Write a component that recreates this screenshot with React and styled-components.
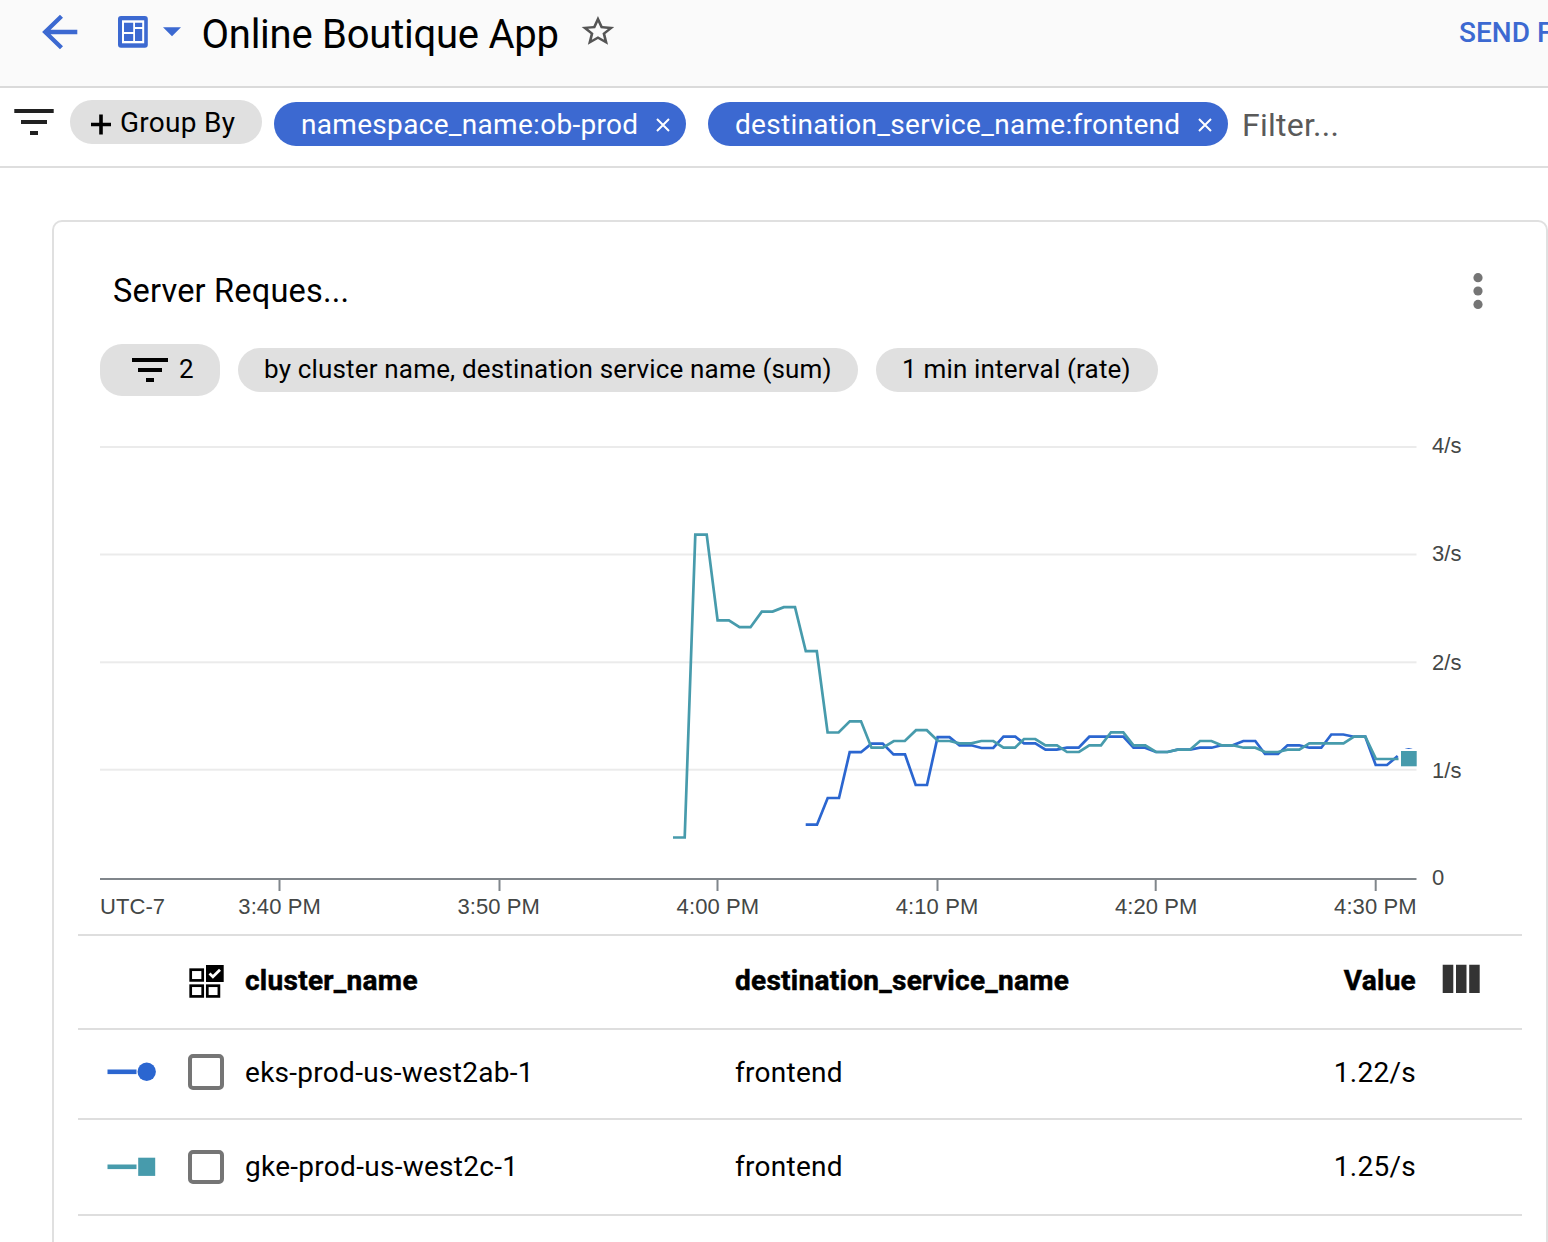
import React from "react";
import styled, { createGlobalStyle } from "styled-components";

const GlobalStyle = createGlobalStyle`
  *, *::before, *::after { box-sizing: border-box; }
  body { margin: 0; background: #fff; overflow: hidden; }
  svg { display: block; flex: none; }
`;

const Page = styled.div`
  display: flex;
  flex-direction: column;
  width: 1548px;
  height: 1242px;
  overflow: hidden;
  background: #fff;
  color: #000;
  font-family: Roboto, "Liberation Sans", sans-serif;
  font-size: 28px;
`;

const Header = styled.header`
  display: flex;
  flex: none;
  height: 88px;
  padding: 0 0 0 40px;
  background: #fafafa;
  border-bottom: 2px solid #dadada;
  white-space: nowrap;
`;

const HeaderIcon = styled.div`
  flex: none;
  width: ${(p) => p.$width}px;
`;

const PageTitle = styled.h1`
  flex: none;
  width: 376.5px;
  margin: 0;
  font-size: 40px;
  font-weight: 400;
  line-height: 70px;
  letter-spacing: -0.24px;
`;

const HeaderAction = styled.a`
  flex: none;
  margin-left: auto;
  width: 89px;
  overflow: hidden;
  color: #3c69d1;
  font-weight: 500;
  line-height: 65px;
`;

const FilterBar = styled.div`
  display: flex;
  flex: none;
  align-items: flex-start;
  height: 80px;
  border-bottom: 2px solid #dedede;
  padding: 12px 0 0 14px;
  white-space: nowrap;
`;

const Pill = styled.div`
  display: flex;
  flex: none;
  align-items: center;
  width: ${(p) => p.$width}px;
  height: ${(p) => p.$height || 44}px;
  margin: ${(p) => p.$margin || "0"};
  padding-left: ${(p) => p.$pad}px;
  border-radius: 22px;
  background: ${(p) => (p.$active ? "#3c69d1" : "#e0e0e0")};
  color: ${(p) => (p.$active ? "#fff" : "#000")};
  font-size: ${(p) => p.$size || 28}px;
  letter-spacing: ${(p) => p.$track || 0}px;
`;

const PillLabel = styled.span`
  line-height: 44px;
  margin-top: ${(p) => p.$drop || 0}px;
`;

const PillIcon = styled.span`
  margin: ${(p) => p.$margin};
`;

const FilterInput = styled.div`
  margin-left: 14px;
  color: #5a5a5a;
  font-size: 32px;
  line-height: 50px;
  letter-spacing: 0.25px;
`;

const Card = styled.section`
  display: flex;
  flex: none;
  flex-direction: column;
  width: 1496px;
  height: 1060px;
  margin: 52px 0 0 52px;
  border: 2px solid #e0e0e0;
  border-radius: 10px;
  padding: 0 24px;
`;

const CardHeader = styled.div`
  display: flex;
  justify-content: space-between;
  flex: none;
  height: 122px;
  padding: 44px 34px 0 35px;
`;

const CardTitle = styled.h2`
  margin: 0;
  font-size: 32.5px;
  font-weight: 400;
  line-height: 50px;
  letter-spacing: 0.2px;
`;

const PillRow = styled.div`
  display: flex;
  flex: none;
  align-items: center;
  gap: 18px;
  height: 52px;
  padding-left: 22px;
  white-space: nowrap;
`;

const ChartArea = styled.div`
  flex: none;
  height: 538px;
`;

const Table = styled.div`
  display: flex;
  flex: none;
  flex-direction: column;
  border-top: 2px solid #dedede;
`;

const TableRow = styled.div`
  display: grid;
  grid-template-columns: 110px 57px 490px 1fr 200px 106px;
  align-items: center;
  height: ${(p) => p.$height}px;
  padding-bottom: ${(p) => p.$lift}px;
  border-bottom: 2px solid #dedede;
  font-weight: ${(p) => (p.$head ? 700 : 400)};
  -webkit-text-stroke: ${(p) => (p.$head ? "0.5px #000" : "0")};
  letter-spacing: 0.28px;
  line-height: 40px;
`;

const Cell = styled.div`
  padding-top: ${(p) => p.$drop || 0}px;
  text-align: ${(p) => (p.$right ? "right" : "left")};
`;

const IconCell = styled.div`
  padding-left: ${(p) => p.$left || 0}px;
`;

const Checkbox = styled.span`
  display: block;
  width: 36px;
  height: ${(p) => p.$height}px;
  border: 4px solid #757575;
  border-radius: 5px;
`;

const AxisText = styled.text`
  font-family: "Liberation Sans", Arial, sans-serif;
  font-size: 22px;
  fill: #444746;
`;

const BLUE = "#2b66d0";
const TEAL = "#479bac";

const tealPoints =
  "673,837.5 684.7,837.5 695.3,534.7 706.7,534.7 717.6,620.3 728.9,620.3 739.5,627.2 750.5,627.2 761.8,611.6 772.6,611.6 783.8,607.2 795,607.2 805.8,651.2 816.8,651.2 827.6,732.5 838.6,732.5 849.8,721.3 861,721.3 871.5,747.7 883,747.7 893.8,741 904.8,741 916,730.2 926.8,730.2 938,741 949.5,741 959.5,743.3 971.3,743.3 981.3,741 993.3,741 1003.5,747.7 1015,747.7 1024,739 1035.3,739 1045.5,745.3 1057,745.3 1067,752 1079,752 1089.3,745.3 1101,745.3 1111,732.3 1123.3,732.3 1133.5,745.3 1145.3,745.3 1156,752 1167.5,752 1177.5,749.7 1190,749.7 1200,741 1211.5,741 1221.5,745.3 1232.7,745.3 1243.5,747.7 1255.3,747.7 1265,752 1278,752 1287.5,749.7 1299.3,749.7 1309.3,743.3 1343.5,743.3 1354,736.7 1365.3,736.7 1376,759 1398.5,759";
const bluePoints =
  "805.7,824.7 817,824.7 827.7,798 839,798 849.7,752.2 861,752.2 871.5,743.6 882.7,743.6 893.5,754.4 905,754.4 915.7,785 927,785 937.6,737.2 949.5,737.2 959.5,745.3 971.3,745.3 981.5,748 993.3,748 1003.5,736.7 1015.3,736.7 1024,743.3 1035.3,743.3 1045.5,749.7 1056.7,749.7 1067,747.7 1078.7,747.7 1089.3,736.7 1123.3,736.7 1133.5,747.7 1145,747.7 1156,752 1167.5,752 1177.5,749.7 1190,749.7 1200,747.7 1211.7,747.7 1221.5,745.3 1232.7,745.3 1243.3,741 1255.3,741 1265,754 1278,754 1287.5,745.3 1299.3,745.3 1309.3,747.7 1321.3,747.7 1331.3,734.5 1343.3,734.5 1354,736.7 1365.3,736.7 1375.7,765 1387,765 1397.7,756";

const yLabels = [
  ["4/s", 447, 453],
  ["3/s", 554.5, 561],
  ["2/s", 662.3, 669.5],
  ["1/s", 769.7, 777.7],
];
const xLabels = [
  ["3:40 PM", 279.5],
  ["3:50 PM", 499.5],
  ["4:00 PM", 717.5],
  ["4:10 PM", 937.5],
  ["4:20 PM", 1155.7],
  ["4:30 PM", 1375.7],
];

function Chart() {
  return (
    <svg width="1444" height="538" viewBox="78 396 1444 538">
      {yLabels.map(([label, y, baseline]) => (
        <g key={label}>
          <rect x="100" y={y - 1} width="1316.5" height="2" fill="#ebebeb" />
          <AxisText x="1432" y={baseline} textLength="29.5">{label}</AxisText>
        </g>
      ))}
      <rect x="100" y="878" width="1316.5" height="2" fill="#80868b" />
      <AxisText x="1432" y="885">0</AxisText>
      <AxisText x="100" y="914" textLength="65">UTC-7</AxisText>
      {xLabels.map(([label, x], i) => (
        <g key={label}>
          <rect x={x - 1} y="880" width="2" height="11" fill="#80868b" />
          <AxisText x={238.3 + i * 219.15} y="914" textLength="82.5">{label}</AxisText>
        </g>
      ))}
      <polyline points={bluePoints} fill="none" stroke={BLUE} strokeWidth="2.7" />
      <circle cx="1408.7" cy="757" r="9" fill={BLUE} />
      <polyline points={tealPoints} fill="none" stroke={TEAL} strokeWidth="2.7" />
      <rect x="1400" y="750" width="17.7" height="17.3" fill={TEAL} stroke="#fff" strokeWidth="2" />
    </svg>
  );
}

function CloseIcon() {
  return (
    <svg width="14" height="14" viewBox="0 0 14 14">
      <path d="M1 1 13 13M13 1 1 13" stroke="#fff" strokeWidth="2" />
    </svg>
  );
}

function SeriesMarker({ color, square }) {
  return (
    <svg width="50" height="20" viewBox="0 0 50 20">
      <rect x="0.5" y="7.5" width="29" height="4.6" fill={color} />
      {square ? (
        <rect x="31.2" y="0.7" width="17" height="18.2" fill={color} />
      ) : (
        <circle cx="39.7" cy="9.8" r="9.2" fill={color} />
      )}
    </svg>
  );
}

const rows = [
  { cluster: "eks-prod-us-west2ab-1", service: "frontend", value: "1.22/s", color: BLUE, height: 90, lift: 4, box: 36, drop: 1 },
  { cluster: "gke-prod-us-west2c-1", service: "frontend", value: "1.25/s", color: TEAL, square: true, height: 96, lift: 1, box: 34, drop: 0 },
];

export default function App() {
  return (
    <Page>
      <GlobalStyle />
      <Header>
        <HeaderIcon $width={76}>
          <svg width="40" height="66" viewBox="40 0 40 66">
            <path d="M77.3 32H45M61.5 16.2 45.2 32 61.5 47.8" fill="none" stroke="#3c69d1" strokeWidth="4.3" />
          </svg>
        </HeaderIcon>
        <HeaderIcon $width={85.5}>
          <svg width="70" height="66" viewBox="116 0 70 66">
            <rect x="118" y="16" width="29.8" height="31.7" rx="3" fill="#3c69d1" />
            <rect x="122" y="20.3" width="22.2" height="23" fill="#fff" />
            <path
              d="M124 22.7h9.2v9.2h-9.2zM135 22.7h7.2v4.3h-7.2zM124 34h9.2v7h-9.2zM135 29h7.2v12h-7.2z"
              fill="#3c69d1"
            />
            <path d="M163 27.3h18l-9 9z" fill="#3c69d1" />
          </svg>
        </HeaderIcon>
        <PageTitle>Online Boutique App</PageTitle>
        <HeaderIcon $width={40}>
          <svg width="40" height="66" viewBox="578 0 40 66">
            <g transform="translate(578.4 13) scale(1.63 1.51)">
              <path
                d="M22 9.24l-7.19-.62L12 2 9.19 8.63 2 9.24l5.46 4.73L5.82 21 12 17.27 18.18 21l-1.63-7.03L22 9.24zM12 15.4l-3.76 2.27 1-4.28-3.32-2.88 4.38-.38L12 6.1l1.71 4.04 4.38.38-3.32 2.88 1 4.28L12 15.4z"
                fill="#555"
              />
            </g>
          </svg>
        </HeaderIcon>
        <HeaderAction>SEND FEEDBACK</HeaderAction>
      </Header>

      <FilterBar>
        <svg width="56" height="44" viewBox="14 100 56 44">
          <path d="M14.3 109h39.4v4H14.3zM21 120h26v4H21zM30 131h8v4h-8z" fill="#212121" />
        </svg>
        <Pill $width={192} $pad={20} $track={0.27}>
          <PillIcon $margin="5px 9px 0 0">
            <svg width="21" height="21" viewBox="0 0 21 21">
              <path d="M1 10.5h20M11 .5v20" stroke="#000" strokeWidth="3.6" />
            </svg>
          </PillIcon>
          <PillLabel $drop={2}>Group By</PillLabel>
        </Pill>
        <Pill $active $width={412} $pad={27} $margin="2px 0 0 12px" $track={0.31}>
          <PillLabel $drop={2}>namespace_name:ob-prod</PillLabel>
          <PillIcon $margin="2px 16px 0 auto">
            <CloseIcon />
          </PillIcon>
        </Pill>
        <Pill $active $width={520} $pad={27} $margin="2px 0 0 22px" $track={0.29}>
          <PillLabel $drop={2}>destination_service_name:frontend</PillLabel>
          <PillIcon $margin="2px 16px 0 auto">
            <CloseIcon />
          </PillIcon>
        </Pill>
        <FilterInput>Filter...</FilterInput>
      </FilterBar>

      <Card>
        <CardHeader>
          <CardTitle>Server Reques...</CardTitle>
          <svg width="20" height="50" viewBox="1468 266 20 50">
            <g fill="#757575">
              <circle cx="1478" cy="277.7" r="4.6" />
              <circle cx="1478" cy="291" r="4.6" />
              <circle cx="1478" cy="304.4" r="4.6" />
            </g>
          </svg>
        </CardHeader>
        <PillRow>
          <Pill $width={120} $height={52} $pad={32} $size={26}>
            <svg width="47" height="24" viewBox="132 358 47 24">
              <path d="M132 358h36v4h-36zM138 368h24v4h-24zM146 378h8v4h-8z" fill="#000" />
            </svg>
            <PillLabel $drop={-2}>2</PillLabel>
          </Pill>
          <Pill $width={620} $pad={26} $size={26} $track={0.17}>
            <PillLabel $drop={-2}>by cluster name, destination service name (sum)</PillLabel>
          </Pill>
          <Pill $width={282} $pad={26} $size={26} $track={0.18}>
            <PillLabel $drop={-2}>1 min interval (rate)</PillLabel>
          </Pill>
        </PillRow>
        <ChartArea>
          <Chart />
        </ChartArea>
        <Table>
          <TableRow $head $height={94} $lift={3}>
            <div />
            <IconCell>
              <svg width="37" height="34" viewBox="188 964 37 34">
                <g fill="none" stroke="#000" strokeWidth="2.7">
                  <rect x="190.7" y="969.7" width="12" height="10.7" />
                  <rect x="190.7" y="985.7" width="12" height="10.7" />
                  <rect x="207.3" y="985.7" width="11.6" height="10.7" />
                </g>
                <rect x="206" y="965" width="17.7" height="17" fill="#000" />
                <path d="M209.5 973.5 212.9 976.7 220 969.8" fill="none" stroke="#fff" strokeWidth="2.8" />
              </svg>
            </IconCell>
            <Cell>cluster_name</Cell>
            <Cell>destination_service_name</Cell>
            <Cell $right>Value</Cell>
            <IconCell $left={26}>
              <svg width="38" height="34" viewBox="1442 964 38 34">
                <path d="M1442.7 964.7h10.6v28.3h-10.6zM1456 964.7h10.5v28.3h-10.5zM1469.2 964.7h10.5v28.3h-10.5z" fill="#333" />
              </svg>
            </IconCell>
          </TableRow>
          {rows.map((r) => (
            <TableRow key={r.cluster} $height={r.height} $lift={r.lift}>
              <IconCell $left={29}>
                <SeriesMarker color={r.color} square={r.square} />
              </IconCell>
              <Checkbox $height={r.box} />
              <Cell $drop={r.drop * 2}>{r.cluster}</Cell>
              <Cell $drop={r.drop * 2}>{r.service}</Cell>
              <Cell $right $drop={r.drop * 2}>{r.value}</Cell>
            </TableRow>
          ))}
        </Table>
      </Card>
    </Page>
  );
}
